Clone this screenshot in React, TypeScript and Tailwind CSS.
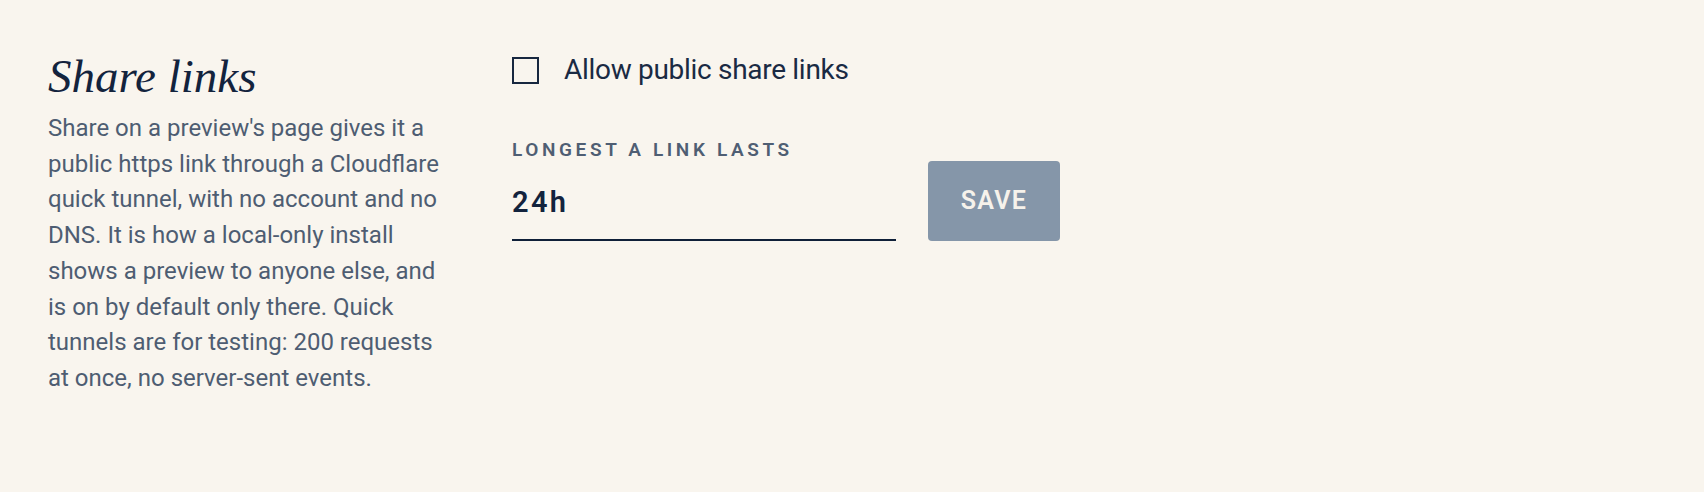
import { useState } from 'react';

const sans = "font-['Roboto','Liberation_Sans',sans-serif]";

export default function App() {
  const [allow, setAllow] = useState(false);
  const [ttl, setTtl] = useState('24h');

  return (
    <div className="min-h-[492px] w-full bg-[#f9f5ee] pl-[48px] pt-[50px]">
      <div className="grid grid-cols-[400px_auto] gap-x-[64px]">
        {/* left: section intro */}
        <div>
          <h2 className="font-['Liberation_Serif','Times_New_Roman',serif] text-[47px] italic leading-[52px] text-[#13233d]">
            Share links
          </h2>
          <p className={`${sans} mt-[9px] text-[24px] leading-[35.7px] text-[#4e5d72]`}>
            Share on a preview's page gives it a public https link through a Cloudflare quick tunnel,
            with no account and no DNS. It is how a local-only install shows a preview to anyone else,
            and is on by default only there. Quick tunnels are for testing: 200 requests at once, no
            server-sent events.
          </p>
        </div>

        {/* right: controls */}
        <div className={`${sans} pt-[2px]`}>
          <label className="flex cursor-pointer items-center gap-[25px]">
            <span
              className={`flex h-[27px] w-[27px] items-center justify-center border-2 border-[#17273f] ${allow ? 'bg-[#17273f]' : ''}`}
            >
              {allow && (
                <svg viewBox="0 0 16 16" className="h-[18px] w-[18px] text-[#f9f5ee]" fill="none" stroke="currentColor" strokeWidth="2.5">
                  <path d="M3 8.5l3.2 3L13 4.5" />
                </svg>
              )}
            </span>
            <input type="checkbox" className="hidden" checked={allow} onChange={(e) => setAllow(e.target.checked)} />
            <span className="text-[28px] leading-[36px] tracking-[-0.3px] text-[#1a2a43]">Allow public share links</span>
          </label>

          <div className="mt-[50px] flex items-end gap-[32px]">
            <div className="flex w-[384px] flex-col">
              <span className="text-[19px] font-semibold uppercase leading-[24px] tracking-[0.19em] text-[#4f5e73]">
                Longest a link lasts
              </span>
              <input
                value={ttl}
                onChange={(e) => setTtl(e.target.value)}
                className="mt-[23px] h-[56px] w-full border-b-2 border-[#0f1f38] bg-transparent pb-[21px] text-[29px] font-semibold tracking-[0.08em] text-[#13233d] outline-none"
              />
            </div>
            <button className="h-[80px] w-[132px] rounded-[4px] bg-[#8596a9] text-[25px] font-semibold uppercase tracking-[0.05em] text-[#f6f2eb]">
              Save
            </button>
          </div>
        </div>
      </div>
    </div>
  );
}
